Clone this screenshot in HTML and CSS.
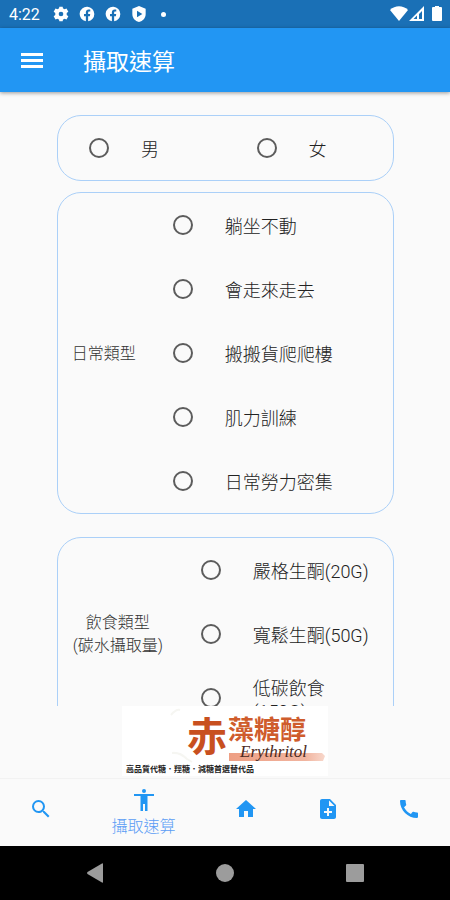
FILE: index.html
```html
<!DOCTYPE html>
<html lang="zh-Hant">
<head>
<meta charset="utf-8">
<meta name="viewport" content="width=device-width, initial-scale=1">
<title>攝取速算</title>
<link rel="stylesheet" href="styles.css">
</head>
<body>
<div class="status">
  <span class="clock">4:22</span>
  <svg class="status-icon" viewBox="0 0 24 24"><path fill-rule="evenodd" d="M20.500 13.500a8 8 0 0 0 0-3l2.500-2-2.700-4.700-3 1.200a8 8 0 0 0-2.300-1.300L14.500 1H9.500L9 3.700A8 8 0 0 0 6.700 5l-3-1.200L1 8.500l2.500 2a8 8 0 0 0 0 3l-2.500 2 2.700 4.700 3-1.200A8 8 0 0 0 9 20.300l.5 2.700h5l.5-2.700a8 8 0 0 0 2.300-1.300l3 1.200 2.700-4.700zM12 15.500a3.500 3.500 0 1 1 0-7 3.500 3.500 0 0 1 0 7z"/></svg>
  <svg class="status-icon" viewBox="0 0 24 24"><path d="M23 12a11 11 0 1 0-12.700 10.900v-7.700H7.500V12h2.800V9.600c0-2.800 1.600-4.300 4.200-4.300 1.200 0 2.400.2 2.400.2v2.700h-1.400c-1.400 0-1.800.9-1.800 1.700V12h3.100l-.5 3.200h-2.600v7.700A11 11 0 0 0 23 12z"/></svg>
  <svg class="status-icon" viewBox="0 0 24 24"><path d="M23 12a11 11 0 1 0-12.700 10.900v-7.700H7.500V12h2.800V9.600c0-2.800 1.600-4.300 4.200-4.300 1.200 0 2.400.2 2.400.2v2.700h-1.400c-1.400 0-1.800.9-1.800 1.700V12h3.100l-.5 3.200h-2.600v7.700A11 11 0 0 0 23 12z"/></svg>
  <svg class="status-icon" viewBox="0 0 24 24"><path fill-rule="evenodd" d="M12 0 2 4v8c0 6 4 10.500 10 12 6-1.500 10-6 10-12V4zM9 7l8 5-8 5z"/></svg>
  <span class="dot"></span>
  <svg class="signals" viewBox="0 0 54 18"><path d="M0 5C5 0 13 0 18 5L9 16z"/><path fill-rule="evenodd" d="M19 16 34 1V16zM27 14V10.500L23.500 14zM29 14H32V6L29 9z"/><path d="M43 2h2V1h4v1h2q1 0 1 1v12q0 1-1 1h-8q-1 0-1-1V3q0-1 1-1z"/></svg>
</div>
<header class="appbar">
  <button class="menu" type="button" aria-label="選單"><svg viewBox="0 0 22 16"><path d="M0 1h22v3H0zM0 7h22v3H0zM0 13h22v3H0z"/></svg></button>
  <h1>攝取速算</h1>
</header>
<main class="content">
  <fieldset class="card pair" aria-label="性別">
    <label class="option"><input type="radio" name="sex"><span>男</span></label>
    <label class="option"><input type="radio" name="sex"><span>女</span></label>
  </fieldset>
  <fieldset class="card daily" aria-labelledby="daily">
    <div class="caption" id="daily">日常類型</div>
    <div class="options">
      <label class="option"><input type="radio" name="daily"><span>躺坐不動</span></label>
      <label class="option"><input type="radio" name="daily"><span>會走來走去</span></label>
      <label class="option"><input type="radio" name="daily"><span>搬搬貨爬爬樓</span></label>
      <label class="option"><input type="radio" name="daily"><span>肌力訓練</span></label>
      <label class="option"><input type="radio" name="daily"><span>日常勞力密集</span></label>
    </div>
  </fieldset>
  <fieldset class="card diet" aria-labelledby="diet">
    <div class="caption" id="diet">飲食類型<br>(碳水攝取量)</div>
    <div class="options">
      <label class="option"><input type="radio" name="diet"><span>嚴格生酮(20G)</span></label>
      <label class="option"><input type="radio" name="diet"><span>寬鬆生酮(50G)</span></label>
      <label class="option"><input type="radio" name="diet"><span>低碳飲食(150G)</span></label>
    </div>
  </fieldset>
</main>
<aside class="banner">
  <svg viewBox="0 0 206 70">
    <defs><linearGradient id="brush"><stop offset="0" stop-color="#ee9f84"/><stop offset=".8" stop-color="#f1b5a0"/><stop offset="1" stop-color="#f8d8cc"/></linearGradient></defs>
    <rect width="206" height="70" fill="#fff"/>
    <path d="M49 9q5-6 9-5M50 47q8-1 15 6l5 3" fill="none" stroke="#f6f6f2" stroke-width="2"/>
    <path d="M107 47H200l3 3-2 5H107z" fill="url(#brush)"/>
    <text class="logo-big" x="65" y="45">赤</text>
    <text class="logo-mid" x="106" y="33">藻糖醇</text>
    <text class="logo-script" x="118" y="51">Erythritol</text>
    <text class="logo-small" x="4" y="66">高品質代糖．羥糖．減糖首選替代品</text>
  </svg>
</aside>
<nav class="tabs">
  <a href="#search" aria-label="搜尋"><svg viewBox="0 0 24 24"><path d="M15.500 14h-.79l-.28-.27A6.470 6.470 0 0 0 16 9.500 6.500 6.500 0 1 0 9.500 16c1.610 0 3.090-.59 4.230-1.570l.27.28v.79l5 4.990L20.490 19zm-6 0C7.010 14 5 11.990 5 9.500S7.010 5 9.500 5 14 7.010 14 9.500 11.990 14 9.500 14z"/></svg></a>
  <a class="active" href="#calc"><svg viewBox="0 0 24 24"><path d="M12 1a2 2 0 1 1 0 4 2 2 0 0 1 0-4zM22 8h-6.500v15h-2.500v-7h-2v7H8.500V8H2V6h20z"/></svg><span>攝取速算</span></a>
  <a href="#home" aria-label="首頁"><svg viewBox="0 0 24 24"><path d="M10 20v-6h4v6h5v-8h3L12 3 2 12h3v8z"/></svg></a>
  <a href="#note" aria-label="新增"><svg viewBox="0 0 24 24"><path fill-rule="evenodd" d="M14 2H6c-1.100 0-2 .9-2 2v16c0 1.100.9 2 2 2h12c1.100 0 2-.9 2-2V8zM16 16h-3v3h-2v-3H8v-2h3v-3h2v3h3zM13 9V3.500L18.500 9z"/></svg></a>
  <a href="#phone" aria-label="電話"><svg viewBox="0 0 24 24"><path d="M20.010 15.380c-1.230 0-2.420-.2-3.530-.56a.98.98 0 0 0-1.010.24l-1.570 1.970c-2.830-1.350-5.480-3.900-6.890-6.830l1.950-1.660c.27-.28.35-.67.24-1.020-.37-1.110-.56-2.300-.56-3.530 0-.54-.45-.99-.99-.99H4.190C3.650 3 3 3.240 3 3.990 3 13.280 10.730 21 20.010 21c.71 0 .99-.63.99-1.180v-3.450c0-.54-.45-.99-.99-.99z"/></svg></a>
</nav>
<div class="system">
  <button type="button" aria-label="返回"><svg viewBox="0 0 20 20"><path d="M18 1v18q0 1-1 .5L2.500 11q-1-1 0-2L17 .5q1-.5 1 .5z"/></svg></button>
  <button type="button" aria-label="主畫面"><svg viewBox="0 0 20 20"><circle cx="10" cy="10" r="9"/></svg></button>
  <button type="button" aria-label="最近"><svg viewBox="0 0 20 20"><rect x="1" y="1" width="18" height="18" rx="1"/></svg></button>
</div>
</body>
</html>
```
FILE: styles.css
```css
* { box-sizing: border-box; }
body {
  margin: 0;
  height: 100vh;
  display: flex;
  flex-direction: column;
  background: #fafafa;
  color: #222;
  font-family: Roboto, "Noto Sans CJK TC", sans-serif;
  font-weight: 300;
  overflow: hidden;
}
svg { display: block; }
button { border: 0; padding: 0; background: none; }

.status {
  flex: none;
  height: 28px;
  display: flex;
  align-items: center;
  gap: 10px;
  padding: 0 6px 0 9px;
  background: #1a70b6;
  color: #fff;
}
.status svg { fill: #fff; }
.clock { width: 34px; font-size: 16px; font-weight: 400; }
.status-icon { width: 16px; height: 16px; }
.dot { width: 5px; height: 5px; margin-left: 4px; border-radius: 50%; background: #fff; }
.signals { width: 54px; height: 18px; margin-left: auto; }

.appbar {
  flex: none;
  z-index: 1;
  height: 64px;
  display: flex;
  align-items: center;
  gap: 40px;
  padding: 0 21px;
  background: #2296f3;
  box-shadow: 0 1px 4px rgba(0, 0, 0, .4);
}
.menu svg { width: 22px; height: 16px; fill: #fff; }
.appbar h1 { margin: 0; color: #fff; font-size: 23px; font-weight: 400; }

.content {
  flex: 1;
  min-height: 0;
  padding: 23px 56px 0 57px;
  overflow: hidden;
}
.card {
  display: grid;
  min-width: 0;
  margin: 0;
  padding: 0;
  border: 1px solid #abd0f8;
  border-radius: 24px;
}
.pair { grid-template-columns: 1fr 1fr; }
.daily { grid-template-columns: 1fr 3fr; margin-top: 11px; }
.diet { grid-template-columns: 1fr 2fr; margin-top: 23px; }
.caption {
  align-self: center;
  padding-left: 8px;
  color: #333;
  font-size: 16px;
  line-height: 23px;
  text-align: center;
  white-space: nowrap;
}
.option {
  height: 64px;
  display: flex;
  align-items: center;
  gap: 32px;
  padding: 0 16px 0 31px;
  font-size: 18px;
  line-height: 23px;
}
.option span { padding-top: 3px; }
.option input {
  appearance: none;
  flex: none;
  width: 20px;
  height: 20px;
  margin: 0;
  border: 2px solid #5c5c5c;
  border-radius: 50%;
}
.option input:checked { border: 6px solid #2296f3; }

.banner { flex: none; display: flex; justify-content: center; padding-bottom: 2px; }
.banner svg { width: 206px; height: 70px; }
.logo-big { font: 700 40px "Noto Sans CJK TC", sans-serif; fill: #c8501f; }
.logo-mid { font: 700 26px "Noto Sans CJK TC", sans-serif; fill: #cf5c2c; }
.logo-script { font: italic 400 17px "Liberation Serif", serif; fill: #4a2a22; }
.logo-small { font: 700 8px "Noto Sans CJK TC", sans-serif; fill: #222; }

.tabs {
  flex: none;
  height: 68px;
  display: flex;
  border-top: 1px solid #f2f2f2;
}
.tabs a {
  flex: 1;
  display: flex;
  flex-direction: column;
  align-items: center;
  justify-content: center;
  padding-bottom: 8px;
  color: #5b9df5;
  font-size: 16px;
  line-height: 23px;
  text-decoration: none;
}
.tabs .active { flex: 0 0 124px; padding-bottom: 0; gap: 3px; }
.tabs svg { width: 24px; height: 24px; fill: #2196f3; }

.system {
  flex: none;
  height: 54px;
  display: flex;
  align-items: center;
  justify-content: center;
  gap: 110px;
  background: #000;
}
.system svg { width: 20px; height: 20px; fill: #9c9c9c; }
```
